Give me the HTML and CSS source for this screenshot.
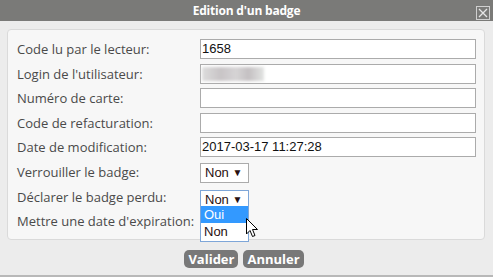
FILE: index.html
```html
<!DOCTYPE html>
<html>
  <head>
    <title>Edition d'un badge</title>
    <link rel="stylesheet" href="styles.css">
  </head>
  <body>
    <div class="dialog">
      <div class="titlebar">
        <span class="title">Edition d'un badge</span>
        <span class="close">
          <svg width="14" height="14" viewBox="0 0 14 14">
            <rect x="0.5" y="0.5" width="13" height="13" fill="none" stroke="#cfcfcf" />
            <path d="M3 3 L11 11 M11 3 L3 11" stroke="#e6e6e6" stroke-width="1.3" />
          </svg>
        </span>
      </div>

      <div class="content">
        <div class="panel">
          <label>Code lu par le lecteur:</label>
          <div class="field">1658</div>

          <label>Login de l'utilisateur:</label>
          <div class="field"><span class="blurred"></span></div>

          <label>Numéro de carte:</label>
          <div class="field"></div>

          <label>Code de refacturation:</label>
          <div class="field"></div>

          <label>Date de modification:</label>
          <div class="field">2017-03-17 11:27:28</div>

          <label>Verrouiller le badge:</label>
          <div><span class="select">Non <span class="arrow">&#9660;</span></span></div>

          <label>Déclarer le badge perdu:</label>
          <div class="select-wrap">
            <span class="select focused">Non <span class="arrow">&#9660;</span></span>
            <!-- open dropdown list -->
            <div class="options">
              <div class="option selected">Oui</div>
              <div class="option">Non</div>
            </div>
            <svg class="cursor" width="13" height="21" viewBox="0 0 13 21">
              <path d="M0.5 0.5 L0.5 16 L4 12.5 L6.5 18.5 L9 17.5 L6.5 11.5 L11.5 11.5 Z" fill="#fff" stroke="#000" stroke-width="1" />
            </svg>
          </div>

          <label>Mettre une date d'expiration:</label>
          <div></div>
        </div>

        <div class="actions">
          <button>Valider</button>
          <button>Annuler</button>
        </div>
      </div>
    </div>
  </body>
</html>
```

FILE: styles.css
```css
body {
  margin: 0;
  padding: 0;
  font-family: "Open Sans", "Noto Sans", sans-serif;
  background-color: #ececec;
}

.dialog {
  width: 493px;
  height: 277px;
  background-color: #ececec;
  border-bottom: 2px solid #b8b8b8;
  box-sizing: border-box;
  display: flex;
  flex-direction: column;
}

.titlebar {
  position: relative;
  height: 21px;
  background-color: #7a7a78;
  display: flex;
  align-items: center;
  justify-content: center;
}

.title {
  color: #fff;
  font-weight: bold;
  font-size: 12px;
  letter-spacing: -0.2px;
}

.close {
  position: absolute;
  right: 3px;
  top: 3px;
  height: 14px;
}

.content {
  padding: 8px 8px 0 7px;
}

.panel {
  background-color: #f7f7f7;
  border: 1px solid #dadada;
  border-radius: 4px;
  padding: 9px 8px 8px 9px;
  display: grid;
  grid-template-columns: 183px 276px;
  grid-auto-rows: 20px;
  row-gap: 4.6px;
  align-items: center;
}

label {
  color: #4a4a4a;
  font-size: 13px;
  line-height: 20px;
  white-space: nowrap;
}

.field {
  height: 20px;
  box-sizing: border-box;
  border: 1px solid #ababab;
  background-color: #fff;
  font-family: "Liberation Sans", Arial, sans-serif;
  font-size: 13px;
  color: #111;
  line-height: 18px;
  padding-left: 1px;
}

.blurred {
  display: inline-block;
  margin-top: 2px;
  width: 62px;
  height: 14px;
  background: linear-gradient(90deg, #ddd, #c8c4c6 30%, #d6d4d5 55%, #c4c0c2 75%, #e2e4e2);
  filter: blur(1.5px);
}

.select {
  display: inline-block;
  height: 20px;
  width: 49px;
  box-sizing: border-box;
  border: 1px solid #ababab;
  background-color: #fff;
  font-family: "Liberation Sans", Arial, sans-serif;
  font-size: 13px;
  color: #2a1010;
  line-height: 18px;
  padding-left: 4px;
  white-space: nowrap;
}

.select.focused {
  border-color: #7ea6d8;
}

.arrow {
  font-size: 10px;
  vertical-align: 1px;
}

.select-wrap {
  position: relative;
  height: 20px;
}

.options {
  position: absolute;
  left: 0;
  top: 19px;
  width: 49px;
  box-sizing: border-box;
  border: 1px solid #7ea6d8;
  border-top: none;
  background-color: #fff;
  font-family: "Liberation Sans", Arial, sans-serif;
  font-size: 13px;
  z-index: 2;
}

.option {
  height: 17.5px;
  line-height: 17px;
  padding-left: 3px;
  color: #2a1010;
}

.option.selected {
  background-color: #3399ff;
  color: #fff;
}

.cursor {
  position: absolute;
  left: 46px;
  top: 31px;
  z-index: 3;
}

.actions {
  display: flex;
  justify-content: center;
  gap: 5px;
  padding-top: 10px;
  padding-right: 4px;
}

button {
  height: 18px;
  padding: 0 4px;
  border: none;
  border-radius: 5px;
  background-color: #787878;
  color: #fff;
  font-family: "Open Sans", "Noto Sans", sans-serif;
  font-weight: bold;
  font-size: 13px;
  line-height: 18px;
}
```
